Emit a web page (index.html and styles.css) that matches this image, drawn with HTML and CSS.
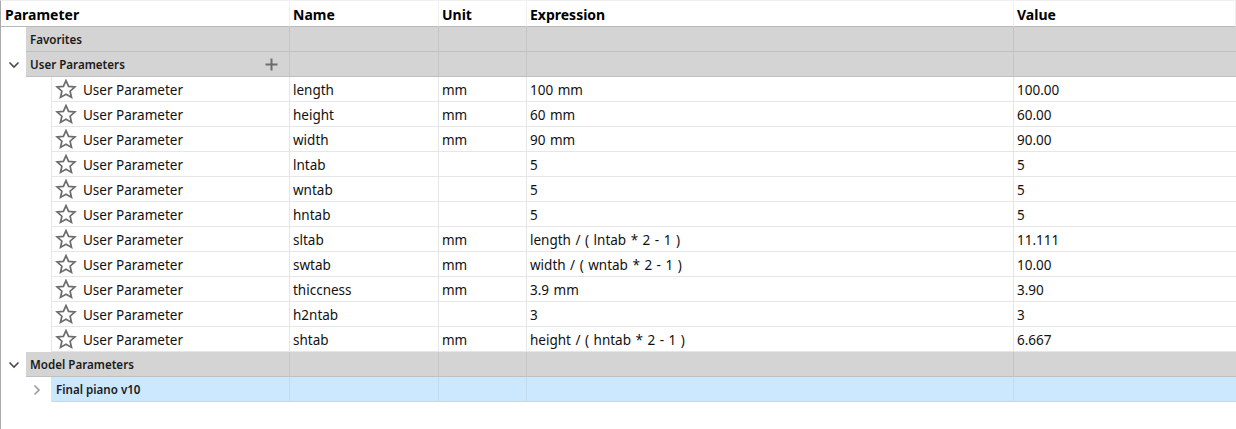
FILE: index.html
```html
<!DOCTYPE html>
<html>
<head>
<meta charset="utf-8">
<link rel="stylesheet" href="styles.css">
</head>
<body>
<div class="table">
  <div class="row header">
    <div class="cell c1">Parameter</div>
    <div class="cell c2">Name</div>
    <div class="cell c3">Unit</div>
    <div class="cell c4">Expression</div>
    <div class="cell c5">Value</div>
  </div>

  <div class="row group">
    <div class="gutter g1"></div>
    <div class="cell c1 gc1"><span class="glabel">Favorites</span></div>
    <div class="cell c2"></div><div class="cell c3"></div><div class="cell c4"></div><div class="cell c5"></div>
  </div>

  <div class="row group">
    <div class="gutter g1"><svg class="chev" width="12" height="8" viewBox="0 0 12 8"><path d="M1.5 1.5 L6 6 L10.5 1.5" fill="none" stroke="#4a4a4a" stroke-width="1.6"/></svg></div>
    <div class="cell c1 gc1"><span class="glabel">User Parameters</span><svg class="plus" width="13" height="13" viewBox="0 0 13 13"><path d="M6.5 0.5 V12.5 M0.5 6.5 H12.5" stroke="#6e6e6e" stroke-width="2"/></svg></div>
    <div class="cell c2"></div><div class="cell c3"></div><div class="cell c4"></div><div class="cell c5"></div>
  </div>

  <div class="rows" id="rows"></div>

  <div class="row group">
    <div class="gutter g1"><svg class="chev" width="12" height="8" viewBox="0 0 12 8"><path d="M1.5 1.5 L6 6 L10.5 1.5" fill="none" stroke="#4a4a4a" stroke-width="1.6"/></svg></div>
    <div class="cell c1 gc1"><span class="glabel">Model Parameters</span></div>
    <div class="cell c2"></div><div class="cell c3"></div><div class="cell c4"></div><div class="cell c5"></div>
  </div>

  <div class="row sel">
    <div class="gutter g2"><svg class="chevr" width="8" height="12" viewBox="0 0 8 12"><path d="M1.5 1.5 L6 6 L1.5 10.5" fill="none" stroke="#9a9a9a" stroke-width="1.6"/></svg></div>
    <div class="cell c1 dc1"><span class="glabel">Final piano v10</span></div>
    <div class="cell c2"></div><div class="cell c3"></div><div class="cell c4"></div><div class="cell c5"></div>
  </div>
</div>
<script src="app.js"></script>
</body>
</html>
```

FILE: app.js
```js
const data = [
  ["length","mm","100 mm","100.00"],
  ["height","mm","60 mm","60.00"],
  ["width","mm","90 mm","90.00"],
  ["lntab","","5","5"],
  ["wntab","","5","5"],
  ["hntab","","5","5"],
  ["sltab","mm","length / ( lntab * 2 - 1 )","11.111"],
  ["swtab","mm","width / ( wntab * 2 - 1 )","10.00"],
  ["thiccness","mm","3.9 mm","3.90"],
  ["h2ntab","","3","3"],
  ["shtab","mm","height / ( hntab * 2 - 1 )","6.667"]
];
const star = '<svg class="star" width="22" height="21" viewBox="0 0 22 21"><path d="M11 1.6 L13.6 7.4 L19.9 8 L15.1 12.2 L16.5 18.4 L11 15.2 L5.5 18.4 L6.9 12.2 L2.1 8 L8.4 7.4 Z" fill="none" stroke="#6c6c6c" stroke-width="1.7" stroke-linejoin="miter"/></svg>';
const host = document.getElementById('rows');
host.innerHTML = data.map(d => `
  <div class="row data">
    <div class="gutter g2"></div>
    <div class="cell c1 dc1">${star}<span>User Parameter</span></div>
    <div class="cell c2">${d[0]}</div>
    <div class="cell c3">${d[1]}</div>
    <div class="cell c4 expr">${d[2]}</div>
    <div class="cell c5">${d[3]}</div>
  </div>`).join('');
```

FILE: styles.css
```css
html, body {
  margin: 0;
  padding: 0;
  background: #ffffff;
}
body {
  font-family: "Noto Sans", "Open Sans", sans-serif;
  font-size: 13.5px;
  color: #111111;
  width: 1236px;
  height: 429px;
  overflow: hidden;
}
.table {
  width: 1236px;
  height: 429px;
  border-left: 1px solid #a9a9a9;
  border-top: 1px solid #f0f0f0;
  box-sizing: border-box;
}
.row {
  display: flex;
  height: 25px;
  box-sizing: border-box;
}
.cell {
  box-sizing: border-box;
  height: 25px;
  display: flex;
  align-items: center;
  padding-left: 3px;
  padding-top: 1px;
  white-space: pre;
  border-right: 1px solid #e6e6e6;
  border-bottom: 1px solid #e6e6e6;
}
.c1 { width: 289px; }
.c2 { width: 149px; }
.c3 { width: 88px; }
.c4 { width: 487px; }
.c5 { flex: 1; border-right: none; }
.expr { word-spacing: 1px; }

.header { height: 26px; }
.header .cell {
  font-weight: 700;
  font-size: 14px;
  color: #000;
  border-right: 1px solid #f0f0f0;
  border-bottom: 1px solid #b9b9b9;
  height: 26px;
}
.header .c1 { padding-left: 4px; }

.gutter {
  flex: none;
  height: 25px;
  display: flex;
  align-items: center;
}
.g1 { width: 25px; }
.g2 { width: 50px; }
.gc1 { width: 264px; padding-left: 4px; }
.dc1 { width: 239px; border-left: 1px solid #e6e6e6; }

.group .cell {
  background: #d4d4d4;
  border-right: 1px solid #c4c4c4;
  border-bottom: 1px solid #c0c0c0;
}
.group .c5 { border-right: none; }
.glabel {
  font-size: 11.6px;
  font-weight: 600;
  color: #1a1a1a;
}
.gc1 { justify-content: space-between; padding-right: 11px; }
.chev { margin-left: 7px; }
.chevr { margin-left: 32px; }
.plus { flex: none; }

.data .dc1 { padding-left: 3px; }
.sel .dc1 { padding-left: 4px; }
.star { flex: none; margin-right: 6px; }

.sel .cell {
  background: #cce8ff;
  border-right: 1px solid #c4dcef;
  border-bottom: 1px solid #c8d6e2;
}
.sel .dc1 { border-left: 1px solid #cce8ff; }
.sel .c5 { border-right: none; }
```
